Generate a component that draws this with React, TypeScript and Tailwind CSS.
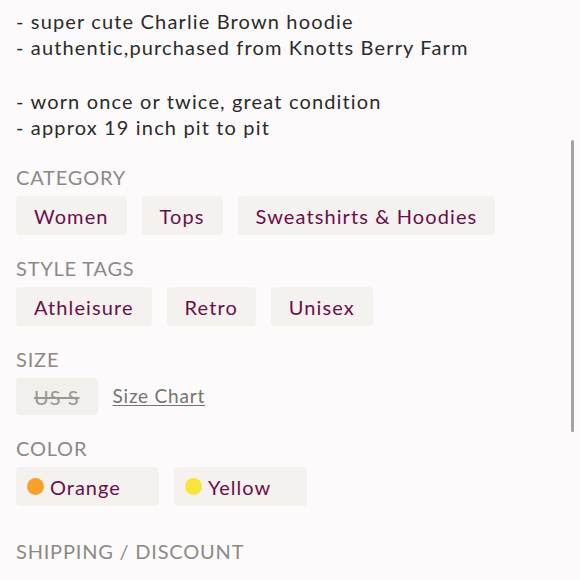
import React from "react";

const Chip = ({ children }: { children: React.ReactNode }) => (
  <span className="inline-flex h-[39px] items-center rounded-[4px] bg-[#f4f1ef] px-[18px] text-[20px] tracking-[1.1px] text-[#6a1048]">
    {children}
  </span>
);

const Heading = ({ children }: { children: React.ReactNode }) => (
  <div className="text-[20px] leading-[26px] tracking-[0.8px] text-[#8d8a86]">{children}</div>
);

export default function App() {
  return (
    <div
      className="relative h-[580px] w-[580px] overflow-hidden bg-[#fcfafa] px-4"
      style={{ fontFamily: "Lato, 'Noto Sans', sans-serif" }}
    >
      <div className="pt-[8px] text-[20px] leading-[26px] tracking-[1.15px] text-[#2b2b2b]">
        <div>- super cute Charlie Brown hoodie</div>
        <div>- authentic,purchased from Knotts Berry Farm</div>
        <div className="h-[28px]" />
        <div>- worn once or twice, great condition</div>
        <div>- approx 19 inch pit to pit</div>
      </div>

      <div className="mt-[24px]">
        <Heading>CATEGORY</Heading>
        <div className="mt-[6px] flex gap-[15px]">
          <Chip>Women</Chip>
          <Chip>Tops</Chip>
          <Chip>Sweatshirts &amp; Hoodies</Chip>
        </div>
      </div>

      <div className="mt-[20px]">
        <Heading>STYLE TAGS</Heading>
        <div className="mt-[6px] flex gap-[15px]">
          <Chip>Athleisure</Chip>
          <Chip>Retro</Chip>
          <Chip>Unisex</Chip>
        </div>
      </div>

      <div className="mt-[20px]">
        <Heading>SIZE</Heading>
        <div className="mt-[6px] flex items-center gap-[15px]">
          <span className="inline-flex h-[37px] items-center rounded-[4px] bg-[#f2efed] px-[18px] text-[20px] tracking-[1px] text-[#9a9793] line-through">
            US S
          </span>
          <span className="text-[19px] tracking-[0.8px] text-[#77736f] underline underline-offset-2">Size Chart</span>
        </div>
      </div>

      <div className="mt-[20px]">
        <Heading>COLOR</Heading>
        <div className="mt-[6px] flex gap-[15px]">
          <span className="inline-flex h-[39px] w-[143px] items-center gap-[6px] rounded-[4px] bg-[#f4f1ef] px-[11px] text-[20px] tracking-[1px] text-[#6a1048]">
            <span className="h-[17px] w-[17px] rounded-full bg-[#f7a12a]" />
            Orange
          </span>
          <span className="inline-flex h-[39px] w-[133px] items-center gap-[6px] rounded-[4px] bg-[#f4f1ef] px-[11px] text-[20px] tracking-[1px] text-[#6a1048]">
            <span className="h-[17px] w-[17px] rounded-full bg-[#f8e43a]" />
            Yellow
          </span>
        </div>
      </div>

      <div className="mt-[32px]">
        <Heading>SHIPPING / DISCOUNT</Heading>
      </div>

      <div className="absolute right-[6px] top-[140px] h-[292px] w-[3px] rounded-full bg-[#a3a3a3]" />
    </div>
  );
}
